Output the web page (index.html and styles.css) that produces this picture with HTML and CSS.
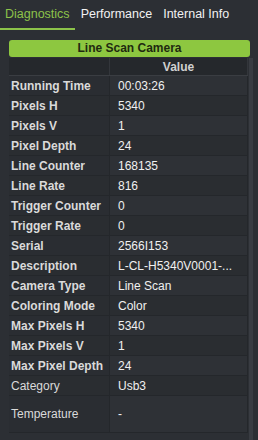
FILE: index.html
```html
<!DOCTYPE html>
<html>
<head>
<meta charset="utf-8">
<link rel="stylesheet" href="styles.css">
</head>
<body>
<div class="tabs">
  <div class="tab active">Diagnostics</div>
  <div class="tab">Performance</div>
  <div class="tab">Internal Info</div>
</div>
<div class="panel">
  <div class="content">
    <div class="title">Line Scan Camera</div>
    <table class="grid">
      <tr class="head"><th></th><th>Value</th></tr>
      <tr><td class="k">Running Time</td><td>00:03:26</td></tr>
      <tr><td class="k">Pixels H</td><td>5340</td></tr>
      <tr><td class="k">Pixels V</td><td>1</td></tr>
      <tr><td class="k">Pixel Depth</td><td>24</td></tr>
      <tr><td class="k">Line Counter</td><td>168135</td></tr>
      <tr><td class="k">Line Rate</td><td>816</td></tr>
      <tr><td class="k">Trigger Counter</td><td>0</td></tr>
      <tr><td class="k">Trigger Rate</td><td>0</td></tr>
      <tr><td class="k">Serial</td><td>2566I153</td></tr>
      <tr><td class="k">Description</td><td>L-CL-H5340V0001-...</td></tr>
      <tr><td class="k">Camera Type</td><td>Line Scan</td></tr>
      <tr><td class="k">Coloring Mode</td><td>Color</td></tr>
      <tr><td class="k">Max Pixels H</td><td>5340</td></tr>
      <tr><td class="k">Max Pixels V</td><td>1</td></tr>
      <tr><td class="k">Max Pixel Depth</td><td>24</td></tr>
      <tr><td class="k reg">Category</td><td>Usb3</td></tr>
      <tr class="tall"><td class="k reg">Temperature</td><td>-</td></tr>
    </table>
  </div>
  <div class="scroll"></div>
</div>
</body>
</html>
```
FILE: styles.css
```css
html, body {
  margin: 0;
  padding: 0;
  background: #2c2f34;
  width: 258px;
  height: 440px;
  overflow: hidden;
  font-family: "Liberation Sans", Arial, sans-serif;
}
.tabs {
  display: flex;
  gap: 1px;
  height: 30px;
}
.tab {
  color: #f2f2f2;
  font-size: 12.5px;
  padding: 7px 5px 0 5px;
  box-sizing: border-box;
  height: 30px;
}
.tab.active {
  color: #8cc34a;
  border-bottom: 2px solid #8cc34a;
}
.panel {
  display: flex;
  padding-left: 9px;
}
.content {
  width: 239px;
  padding-top: 10px;
}
.title {
  background: #8dc740;
  color: #1f2a10;
  font-weight: bold;
  font-size: 12px;
  text-align: center;
  height: 17px;
  line-height: 17px;
  border-radius: 3px;
  margin-right: -2px;
}
.grid {
  border-collapse: collapse;
  width: 239px;
  font-size: 12px;
  margin-top: 1px;
}
.grid th {
  background: #25282c;
  color: #d0d0d0;
  font-weight: bold;
  height: 17px;
  padding: 0;
  text-align: center;
  border-right: 1px solid #33363b;
  border-bottom: 1px solid #3a3d42;
}
.grid th:first-child { width: 100px; }
.grid td {
  height: 19px;
  padding: 0 0 0 8px;
  color: #f0f0f0;
  border-bottom: 1px solid #24272b;
  border-right: 1px solid #24272b;
  background: #2e3136;
}
.grid tr:nth-child(odd) td { background: #2a2d31; }
.grid td.k {
  padding-left: 2px;
  font-weight: bold;
  color: #dadada;
  background: #2a2d32;
}
.grid td.k.reg { font-weight: normal; }
.grid tr.tall td { height: 36px; }
.scroll {
  width: 4px;
  margin-left: 1px;
  margin-top: 28px;
  height: 382px;
  background: #393c42;
}
```
